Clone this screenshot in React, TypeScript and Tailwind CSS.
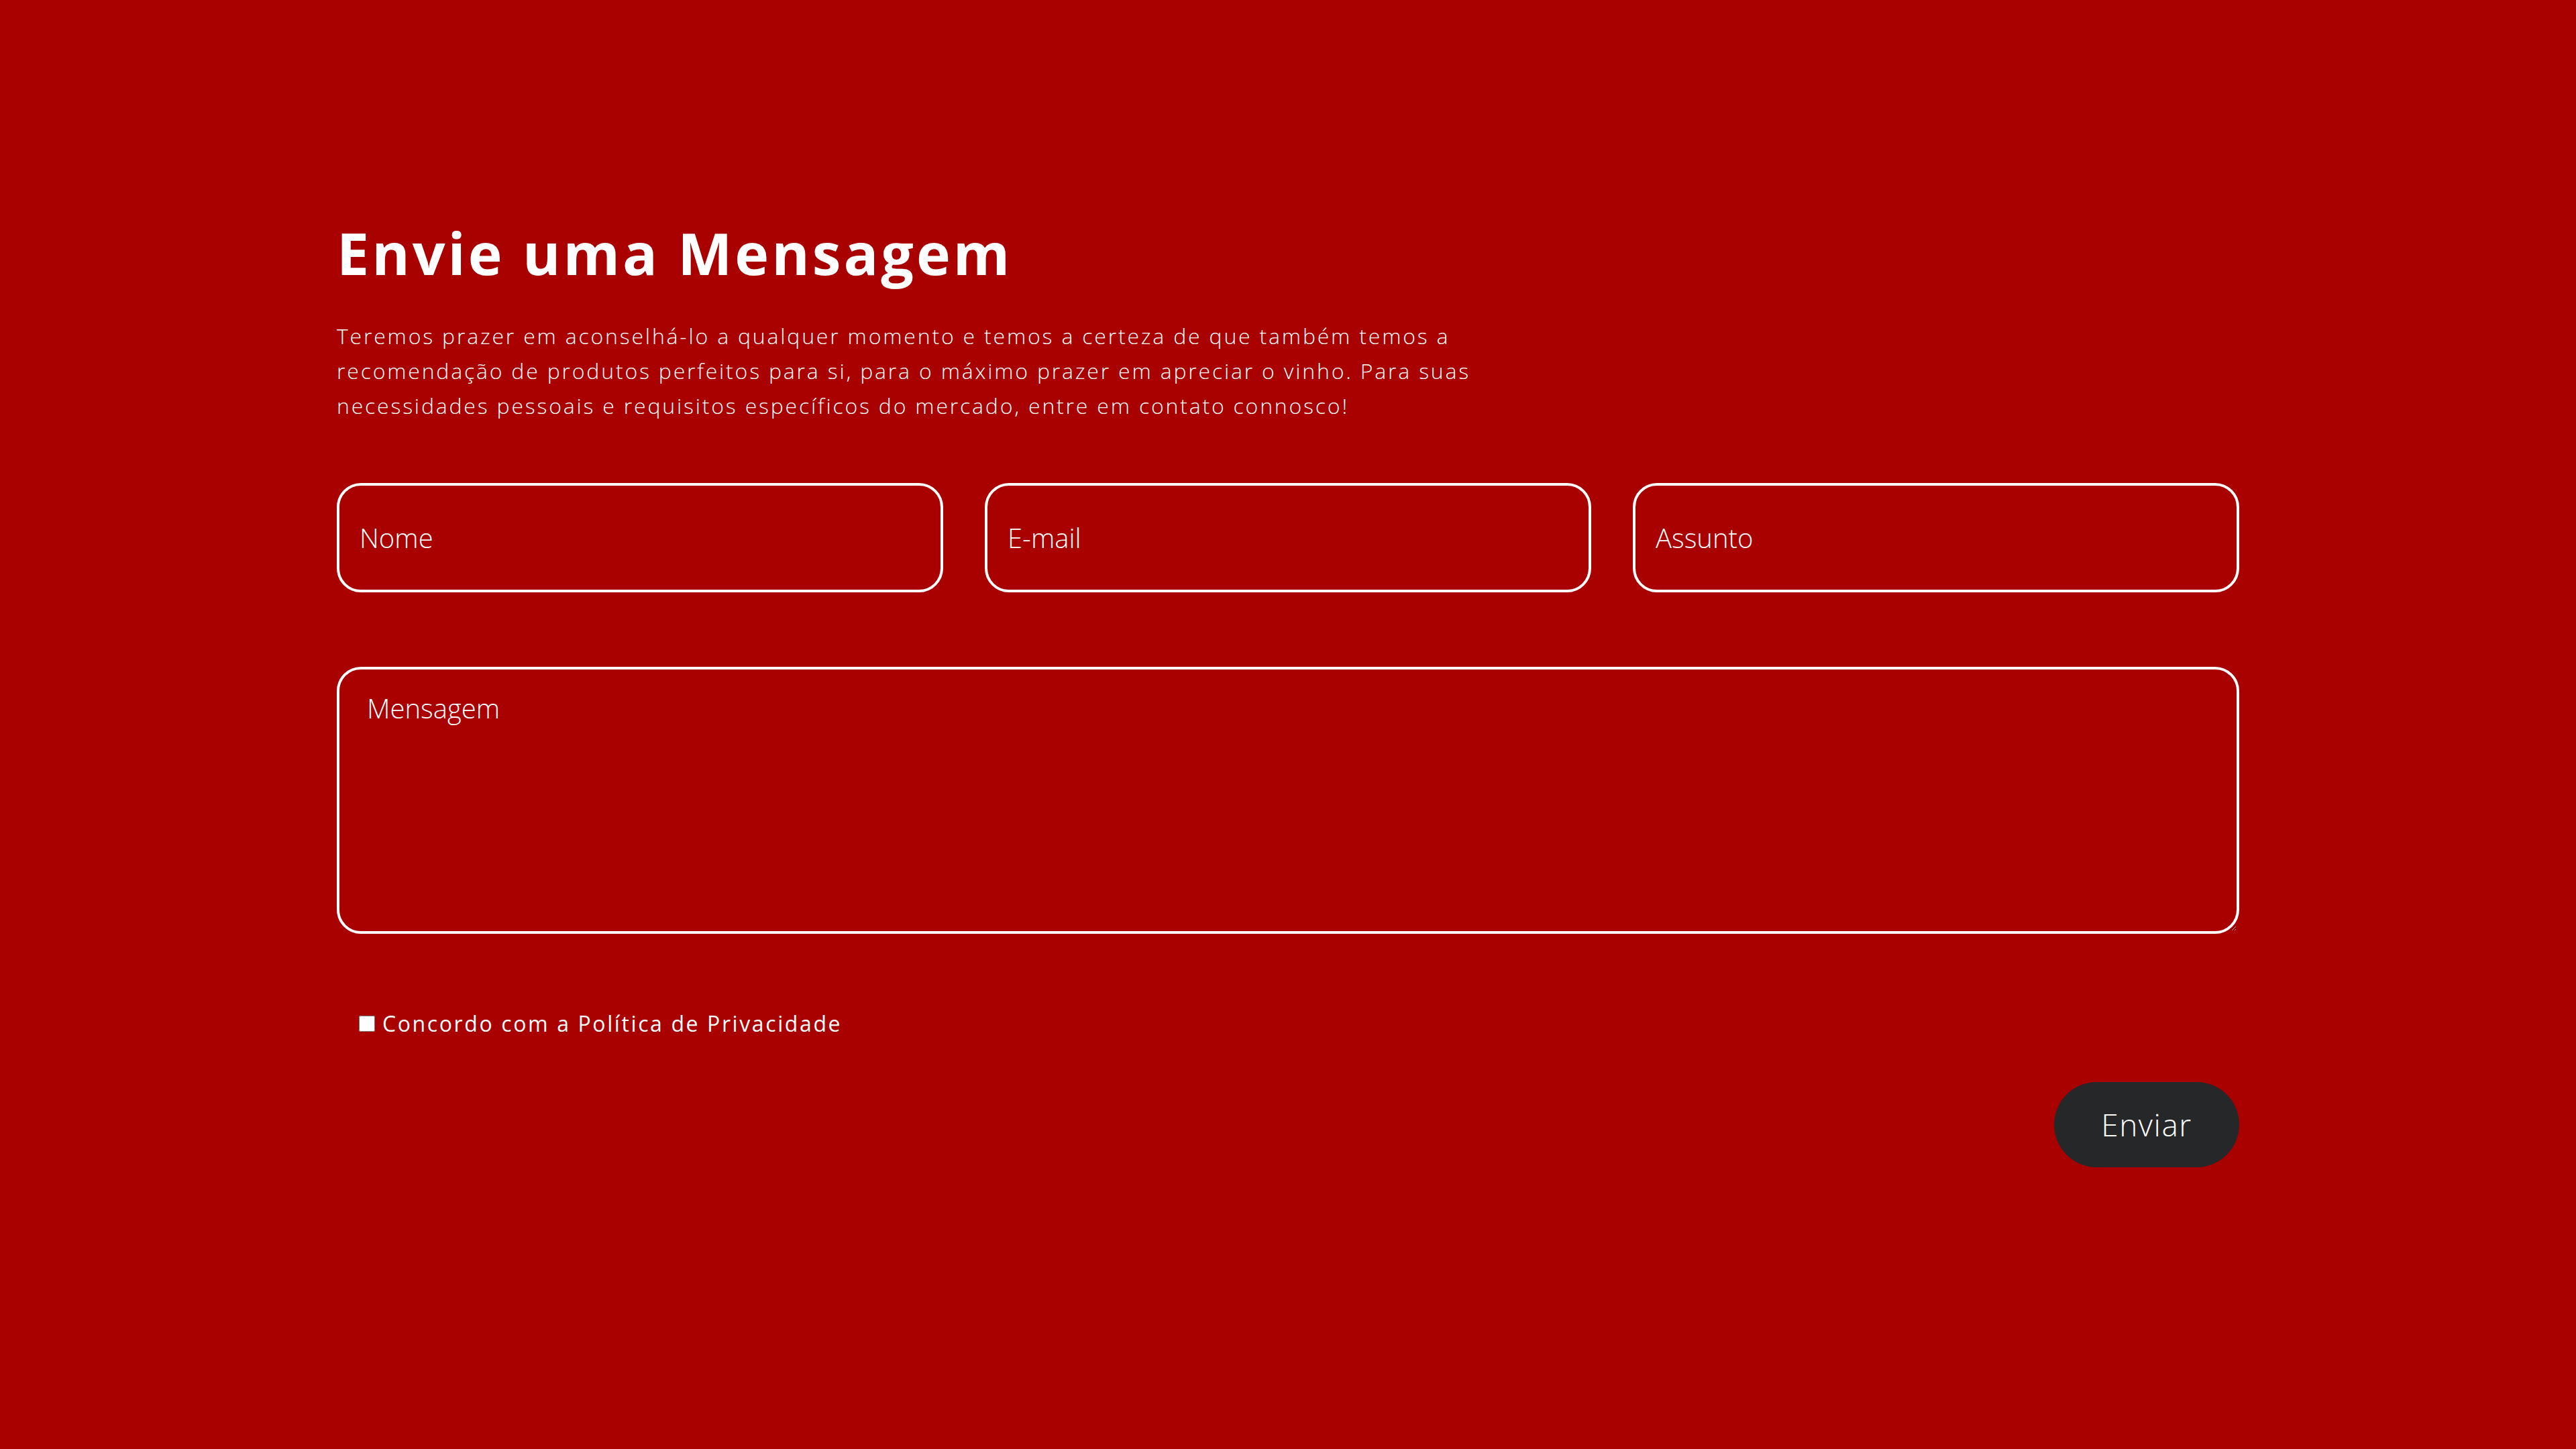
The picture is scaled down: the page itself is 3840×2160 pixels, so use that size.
const fields = ["Nome", "E-mail", "Assunto"];

export default function App() {
  return (
    <div className="min-h-screen bg-[#a90000] font-['Open_Sans',sans-serif] text-white">
      <div className="mx-auto w-[2836px] pt-[325px]">
        <h2 className="text-[86px] font-bold leading-[1.2] tracking-[4px]">Envie uma Mensagem</h2>
        <p className="mt-[47px] w-[1900px] text-[32px] font-light leading-[52px] tracking-[2.8px]">
          Teremos prazer em aconselhá-lo a qualquer momento e temos a certeza de que também temos a
          <br />
          recomendação de produtos perfeitos para si, para o máximo prazer em apreciar o vinho. Para suas
          <br />
          necessidades pessoais e requisitos específicos do mercado, entre em contato connosco!
        </p>

        <form className="mt-[89px]" onSubmit={(e) => e.preventDefault()}>
          <div className="grid grid-cols-3 gap-[62px]">
            {fields.map((f) => (
              <input
                key={f}
                type="text"
                placeholder={f}
                className="h-[163px] rounded-[36px] border-4 border-white bg-transparent px-[30px] text-[40px] font-light text-white outline-none placeholder:text-white"
              />
            ))}
          </div>

          <textarea
            placeholder="Mensagem"
            className="mt-[111px] block h-[398px] w-full rounded-[36px] border-4 border-white bg-transparent px-[41px] pt-[28px] text-[40px] font-light leading-[1.5] text-white outline-none placeholder:text-white"
          />

          <label className="mt-[114px] ml-[33px] flex items-center text-[32px] leading-[40px] tracking-[2.6px]">
            <input type="checkbox" className="h-6 w-6 accent-white" />
            <span className="ml-[11px]">Concordo com a Política de Privacidade</span>
          </label>

          <div className="mt-[67px] flex justify-end">
            <button
              type="submit"
              className="h-[127px] w-[276px] rounded-full bg-[#252728] text-[46px] font-light tracking-[1.5px] text-white"
            >
              Enviar
            </button>
          </div>
        </form>
      </div>
    </div>
  );
}
